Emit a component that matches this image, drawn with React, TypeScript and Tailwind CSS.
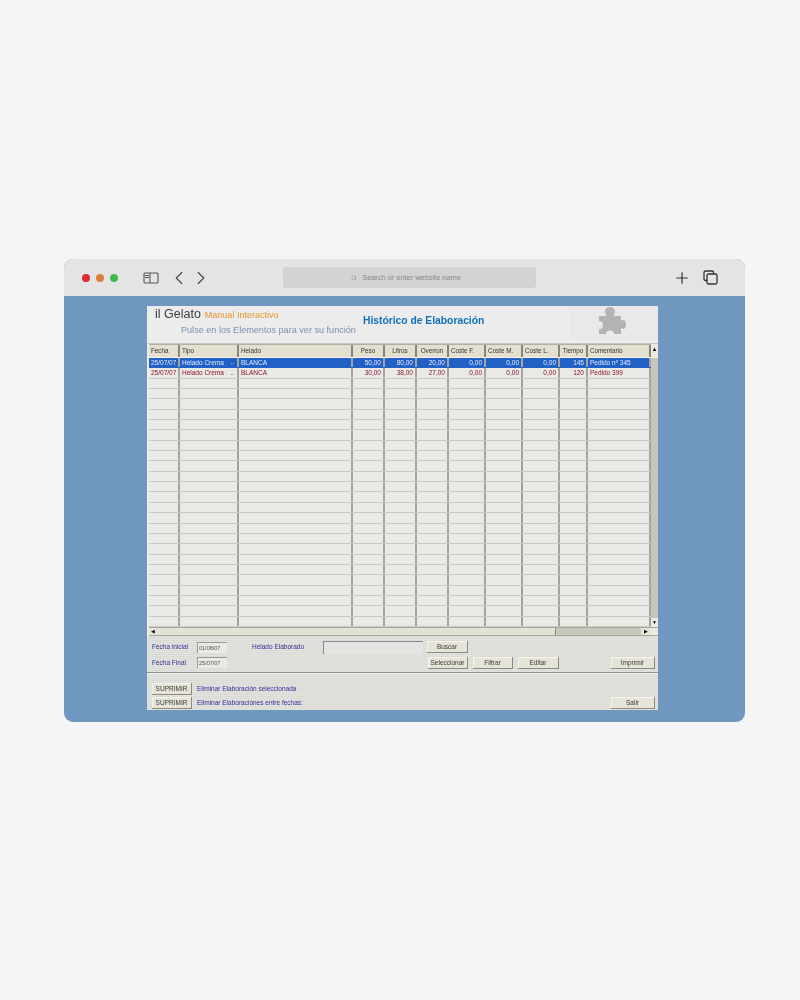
import { ChevronLeft, ChevronRight, Plus, Search } from "lucide-react";

const columns = "grid grid-cols-[31px_59px_114px_32px_32px_32px_37px_37px_37px_28px_63px]";

const headers = [
  { label: "Fecha", centered: false },
  { label: "Tipo", centered: false },
  { label: "Helado", centered: false },
  { label: "Peso", centered: true },
  { label: "Litros", centered: true },
  { label: "Overrun", centered: true },
  { label: "Coste F.", centered: false },
  { label: "Coste M.", centered: false },
  { label: "Coste L.", centered: false },
  { label: "Tiempo", centered: true },
  { label: "Comentario", centered: false },
];

const rows = [
  ["25/07/07", "Helado Crema", "BLANCA", "50,00", "80,00", "20,00", "0,00", "0,00", "0,00", "145", "Pedido nº 345"],
  ["25/07/07", "Helado Crema", "BLANCA", "30,00", "38,00", "27,00", "0,00", "0,00", "0,00", "120", "Pedido 399"],
];

const leftAligned = [1, 2, 10];

function PanelButton({ label, className }: { label: string; className: string }) {
  return (
    <button className={`flex h-[12px] items-center justify-center border-r border-b border-r-[#8a8a80] border-b-[#8a8a80] bg-[#e6e4d6] text-[6.5px] text-[#3a3a3a] shadow-[inset_1px_1px_0_#f6f6f0] ${className}`}>
      {label}
    </button>
  );
}

function DateField({ value }: { value: string }) {
  return (
    <div className="flex h-[11px] w-[30px] items-center border-t border-l border-t-[#999] border-l-[#999] bg-[#e9e9e6] pl-px text-[5.5px] text-[#555]">
      {value}
    </div>
  );
}

function Label({ text, className }: { text: string; className: string }) {
  return <span className={`text-[6.5px] leading-none text-[#30309a] ${className}`}>{text}</span>;
}

function BrowserBar() {
  return (
    <div className="flex h-[37px] items-center bg-[#e4e4e4] pl-[18px]">
      <div className="flex w-[46px] gap-[6px]">
        <span className="h-2 w-2 rounded-full bg-[#dd2c35]" />
        <span className="h-2 w-2 rounded-full bg-[#dd8038]" />
        <span className="h-2 w-2 rounded-full bg-[#3dbb4c]" />
      </div>
      <svg width="16" height="12" viewBox="0 0 16 12" fill="none" stroke="#555" strokeWidth="1.1" className="mr-[9px] ml-[15px]">
        <rect x="1" y="1" width="14" height="10" rx="1" />
        <path d="M7 1v10M2 3.500h4M2 5.500h4" />
      </svg>
      <ChevronLeft size={22} strokeWidth={1.2} color="#444" />
      <ChevronRight size={22} strokeWidth={1.2} color="#444" />
      <div className="ml-[71px] flex h-[21px] w-[253px] items-center justify-center gap-[5px] rounded-[3px] bg-[#d3d3d3] pr-[7px] text-[7.4px] text-[#8a8a8a]">
        <Search size={6} strokeWidth={2} />
        Search or enter website name
      </div>
      <Plus size={18} strokeWidth={1.6} color="#333" className="ml-[137px]" />
      <svg width="15" height="15" viewBox="0 0 15 15" fill="none" stroke="#333" strokeWidth="1.3" className="ml-[12px]">
        <rect x="1" y="1" width="9.5" height="9.500" rx="1.5" />
        <rect x="4" y="4" width="10" height="10" rx="1.5" fill="#e4e4e4" />
      </svg>
    </div>
  );
}

function AppHeader() {
  return (
    <div className="flex h-[35px] bg-[#ececec]">
      <div className="w-[208px] pt-[1px] pl-[8px]">
        <div className="flex items-baseline gap-[4px] whitespace-nowrap">
          <span className="text-[12.5px] leading-[15px] text-[#3c3c44]">il Gelato</span>
          <span className="text-[9px] text-[#e8962e]">Manual Interactivo</span>
        </div>
        <div className="mt-[2px] pl-[26px] text-[9.1px] leading-[11px] whitespace-nowrap text-[#7c90b4]">
          Pulse en los Elementos para ver su función
        </div>
      </div>
      <div className="w-[215px] pt-[8px] pl-[8px] text-[10.3px] leading-[13px] font-bold whitespace-nowrap text-[#0f70b8]">
        Histórico de Elaboración
      </div>
      <div className="flex w-[88px] items-start bg-[#e9e9e9] pl-[27px]">
        <svg width="30" height="29" viewBox="0 0 30 29" fill="#b3b3b3">
          <path d="M2 10H9C9.500 8.500 8 7.500 8 5.500C8 3 10 1 13 1S18 3 18 5.500C18 7.500 16.500 8.500 17 10H24V14.500C25 15 25.500 14 26 14C28 14 29 16 29 18.500S28 23 26 23C25.500 23 25 22 24 22.500V28H17C17 26 16 24.500 13 24.500S9 26 9 28H2V23C3.500 23.500 6 22.500 6 19S3.500 14.500 2 15Z" />
        </svg>
      </div>
    </div>
  );
}

function Table() {
  return (
    <div className="flex flex-col pl-[2px]">
      <div className="flex">
        <div className="w-[502px]">
          <div className={`${columns} h-[13px] border-t border-[#b0b0a6] bg-[#e3e0cf]`}>
            {headers.map((h) => (
              <div
                key={h.label}
                className={`flex h-[12px] items-center border-r-2 border-r-[#85857a] px-[2px] text-[6.3px] whitespace-nowrap text-[#333] ${h.centered ? "justify-center" : "justify-start"}`}
              >
                {h.label}
              </div>
            ))}
          </div>
          <div className="h-[1px] bg-[#f4f4f0]" />
          {Array.from({ length: 26 }).map((_, i) => {
            const row = rows[i];
            return (
              <div
                key={i}
                className={`${columns} h-[10.35px] border-b ${i === 0 ? "border-[#2160c4] bg-[#2160c4] text-[#e4ecff]" : "border-[#c9c9c4] bg-[#e9e9e6] text-[#8f1526]"}`}
              >
                {Array.from({ length: 11 }).map((_, c) => (
                  <div
                    key={c}
                    className={`relative h-full overflow-hidden border-r-2 border-r-[#a4a49b] px-[2px] text-[6.5px] leading-[10px] whitespace-nowrap ${leftAligned.includes(c) ? "text-left" : "text-right"}`}
                  >
                    {row ? row[c] : ""}
                    {row && c === 1 ? <span className="absolute right-[3px] bottom-0">..</span> : null}
                  </div>
                ))}
              </div>
            );
          })}
        </div>
        <div className="flex w-[7px] flex-col justify-between bg-[#c8c6bc]">
          <div className="h-[14px] bg-[#ecebe0] text-center text-[6px] leading-[10px] text-black">▲</div>
          <div className="h-[9px] bg-[#ecebe0] text-center text-[5px] leading-[9px] text-black">▼</div>
        </div>
      </div>
      <div className="flex h-[9px] border-t border-b border-[#a9a89c]">
        <div className="flex w-[7px] items-center justify-center bg-[#e6e4d6] text-[5px] text-black">◀</div>
        <div className="w-[400px] border-r border-r-[#8a8a7e] bg-[#e4e2d2]" />
        <div className="w-[85px] bg-[#c9c7bd]" />
        <div className="flex w-[9px] items-center justify-center bg-[#e6e4d6] text-[5px] text-black">▶</div>
        <div className="w-[8px] bg-[#ecebe0]" />
      </div>
    </div>
  );
}

function BottomPanel() {
  return (
    <div className="flex-1 bg-[repeating-linear-gradient(0deg,#e2e2df_0px,#e2e2df_1px,#dadad7_1px,#dadad7_2px)] pt-[5px] pr-[3px] pl-[5px]">
      <div className="flex items-center">
        <Label text="Fecha inicial" className="w-[45px]" />
        <DateField value="01/08/07" />
        <Label text="Helado Elaborado" className="ml-[25px] w-[71px]" />
        <div className="h-[13px] w-[100px] border-t border-l border-t-[#888] border-l-[#888] bg-[#e4e4e2]" />
        <PanelButton label="Buscar" className="ml-[4px] w-[41px]" />
      </div>
      <div className="mt-[3px] flex items-center">
        <Label text="Fecha Final" className="w-[45px]" />
        <DateField value="25/07/07" />
        <PanelButton label="Seleccionar" className="ml-[201px] w-[40px]" />
        <PanelButton label="Filtrar" className="ml-[5px] w-[40px]" />
        <PanelButton label="Editar" className="ml-[5px] w-[41px]" />
        <PanelButton label="Imprimir" className="ml-auto w-[44px]" />
      </div>
      <div className="mt-[3px] -mr-[3px] -ml-[5px] h-[2px] border-t border-b border-t-[#8e8e8a] border-b-[#f2f2f0]" />
      <div className="mt-[9px] flex items-center">
        <PanelButton label="SUPRIMIR" className="w-[40px]" />
        <Label text="Eliminar Elaboración seleccionada" className="ml-[5px]" />
      </div>
      <div className="mt-[2px] flex items-center">
        <PanelButton label="SUPRIMIR" className="w-[40px]" />
        <Label text="Eliminar Elaboraciónes entre fechas:" className="ml-[5px]" />
        <PanelButton label="Salir" className="ml-auto w-[44px]" />
      </div>
    </div>
  );
}

export default function App() {
  return (
    <div className="h-[1000px] bg-[#f5f5f5] pt-[259px] pl-[64px] font-['Liberation_Sans',Arial,sans-serif]">
      <div className="h-[463px] w-[681px] overflow-hidden rounded-[9px] bg-[#7097bf]">
        <BrowserBar />
        <div className="pt-[10px] pl-[83px]">
          <div className="flex h-[404px] w-[511px] flex-col overflow-hidden bg-[#ececec] blur-[0.5px]">
            <AppHeader />
            <div className="h-[3px] border-b border-[#c9c9c9]" />
            <Table />
            <BottomPanel />
          </div>
        </div>
      </div>
    </div>
  );
}
